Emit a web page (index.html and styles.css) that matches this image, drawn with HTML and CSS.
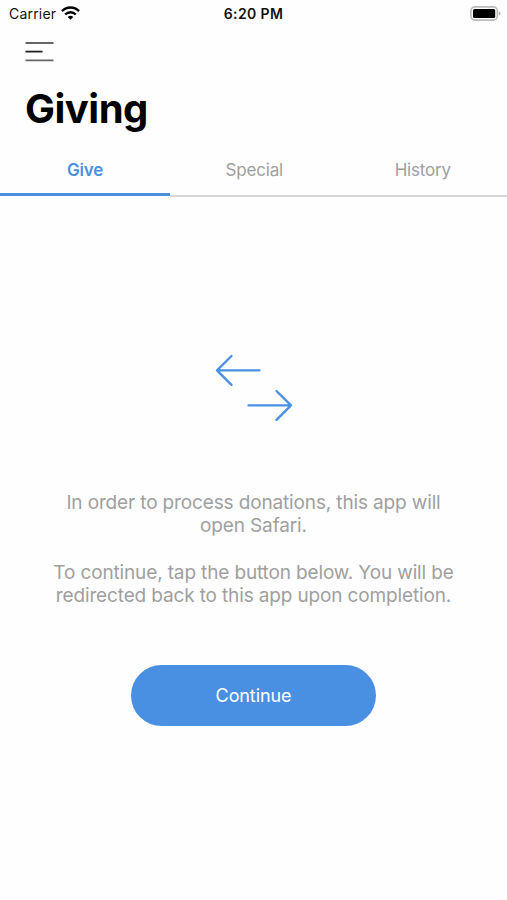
FILE: index.html
```html
<!DOCTYPE html>
<html lang="en">
<head>
  <meta charset="UTF-8" />
  <meta name="viewport" content="width=device-width, initial-scale=1.0"/>
  <title>Giving</title>
  <link rel="stylesheet" href="styles.css">
</head>
<body>

<div class="status-bar">
  <div class="carrier">
    <span>Carrier</span>
    <svg class="wifi" viewBox="0 0 19 14" width="19" height="14">
      <path d="M1 5.100a12 12 0 0 1 17 0" />
      <path d="M4.200 8.500a7.500 7.500 0 0 1 10.600 0" />
      <path class="dot" d="M9.500 13.800L6.700 11a4 4 0 0 1 5.600 0z" />
    </svg>
  </div>
  <div class="time">6:20 PM</div>
  <svg class="battery" viewBox="0 0 31 15" width="31" height="15">
    <rect class="shell" x="0.9" y="0.9" width="26.4" height="13.2" rx="4" />
    <rect x="3" y="3" width="22.2" height="9" rx="1.5" />
    <path class="tip" d="M28.6 5.2q2 .8 2 2.3t-2 2.3z" />
  </svg>
</div>

<header>
  <button class="menu-btn" aria-label="Menu">
    <svg viewBox="0 0 29 20" width="29" height="20">
      <path class="outer" d="M0.500 1h28M0.500 18.400h28" />
      <path class="inner" d="M0.500 9.600h17" />
    </svg>
  </button>
  <h1>Giving</h1>
</header>

<nav class="tabs">
  <a class="tab active" href="#">Give</a>
  <a class="tab" href="#">Special</a>
  <a class="tab" href="#">History</a>
</nav>

<main>
  <svg class="arrows" viewBox="0 0 78 68" width="78" height="68">
    <path d="M44.500 17.400H2M16.500 3L2 17.400l14.500 14.500" />
    <path d="M33.500 52.400H76M61.500 38L76 52.400 61.500 66.900" />
  </svg>
  <p class="first">In order to process donations, this app will<br>open Safari.</p>
  <p class="second">To continue, tap the button below. You will be<br>redirected back to this app upon completion.</p>
  <button class="continue-btn">Continue</button>
</main>

</body>
</html>
```

FILE: styles.css
```css
* { box-sizing: border-box; }
body {
  margin: 0;
  font-family: Inter, sans-serif;
  background: #fefefe;
  color: #000;
  height: 100vh;
  overflow: hidden;
}
button {
  border: none;
  padding: 0;
  font-family: inherit;
  cursor: pointer;
}
svg { display: block; }
.status-bar {
  display: grid;
  grid-template-columns: 1fr auto 1fr;
  align-items: center;
  height: 27px;
  padding: 0 6px 0 9px;
  font-size: 14px;
  color: #111;
}
.carrier {
  display: flex;
  align-items: center;
  gap: 5px;
  letter-spacing: 0.2px;
}
.wifi {
  margin-bottom: 2px;
  fill: none;
  stroke: #000;
  stroke-width: 2.4;
}
.wifi .dot {
  fill: #000;
  stroke: none;
}
.time {
  font-weight: 600;
  letter-spacing: 0.4px;
  margin-right: 3px;
}
.battery { justify-self: end; }
.shell {
  fill: none;
  stroke: #bbb;
  stroke-width: 1.6;
}
.tip { fill: #bbb; }
header {
  height: 118px;
  padding: 15px 25px 0;
}
.menu-btn {
  display: block;
  background: none;
}
.menu-btn path { stroke-width: 1.8; }
.outer { stroke: #666; }
.inner { stroke: #222; }
h1 {
  margin: 22px 0 0;
  font-size: 40px;
  line-height: 50px;
  font-weight: 700;
  letter-spacing: -0.5px;
}
.tabs {
  display: flex;
  height: 52px;
}
.tab {
  flex: 1;
  padding-top: 15px;
  line-height: 20px;
  font-size: 17px;
  letter-spacing: -0.2px;
  text-align: center;
  text-decoration: none;
  color: #a0a0a0;
  border-bottom: 2px solid #d8d8d8;
}
.tab.active {
  flex: 0 0 170px;
  height: 51px;
  color: #4a90e2;
  font-weight: 600;
  border-bottom: 3px solid #4a90e2;
}
main {
  display: flex;
  flex-direction: column;
  align-items: center;
  padding-top: 156px;
}
.arrows {
  fill: none;
  stroke: #4a90e2;
  stroke-width: 2.3;
  stroke-linecap: round;
  stroke-linejoin: round;
}
p {
  margin: 0;
  font-size: 19px;
  line-height: 23.3px;
  letter-spacing: -0.14px;
  text-align: center;
  white-space: nowrap;
  color: #a0a0a0;
}
.first { margin-top: 70px; }
.second { margin-top: 23px; }
.continue-btn {
  width: 245px;
  height: 61px;
  margin-top: 58.3px;
  border-radius: 31px;
  background: #4a90e2;
  color: #fff;
  font-size: 18px;
  letter-spacing: -0.1px;
}
```
